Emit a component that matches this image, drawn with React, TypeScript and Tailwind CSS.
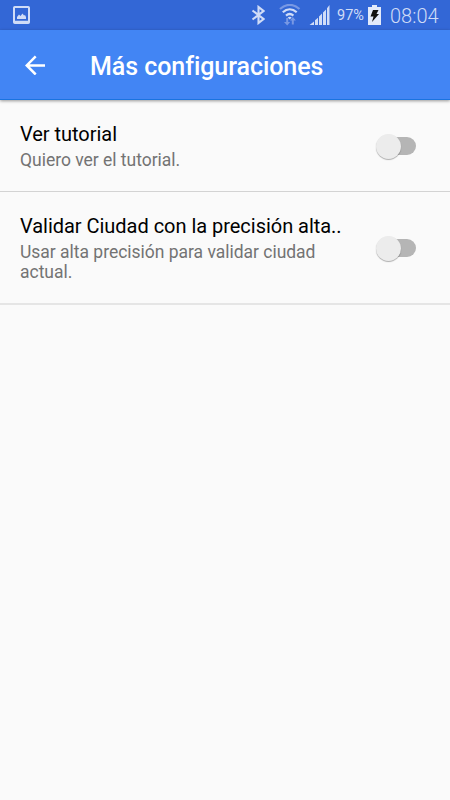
import React from 'react';

interface SettingRowProps {
  title: string;
  description: string;
  className: string;
}

const StatusBar: React.FC = () => {
  return (
    <div className="flex h-[30px] items-center bg-[#3367d6] text-[#d0dcf7]">
      {/* Screenshot notification */}
      <svg className="ml-[13px] h-[18px] w-[17px]" viewBox="0 0 17 18" fill="none">
        <rect x="1" y="1" width="15" height="16" rx="0.8" stroke="currentColor" strokeWidth="2" />
        <path d="M2 15.5h13" stroke="currentColor" strokeWidth="1.5" />
        <path d="M4 13v-2l2-2.5L7.500 10l2-2.500 1.500 2 1-.5 1 2v2z" fill="currentColor" />
      </svg>

      <svg className="ml-[221px] h-5 w-[14px]" viewBox="0 0 14 20" fill="none" stroke="currentColor" strokeWidth="2.100">
        <path d="M1.500 5.500l11 8.500L7.500 18V2l5 4-11 8.500" />
      </svg>

      {/* Wifi with up/down traffic arrows */}
      <svg className="ml-[14px] h-[22px] w-[22px]" viewBox="0 0 22 22" fill="none">
        <path d="M1 5C7-.5 14.500-.5 20.500 5" stroke="#7898e4" strokeWidth="2.200" />
        <path d="M3.800 8.300c4.200-3.900 9.700-3.900 13.900 0M7 11.600c2.400-2.100 5-2.100 7.400 0" stroke="currentColor" strokeWidth="2.200" />
        <path d="M8.700 13.400q2-1.500 4 0l-2 2z" fill="currentColor" />
        <path d="M7.200 14h2v4h2L8.200 21.500 5 18h2.200zM14.800 20.500h-2v-4H11l2.900-3.500 3 3.500h-2.100z" fill="#7898e4" />
      </svg>

      <svg className="ml-[8px] h-5 w-[21px]" viewBox="0 0 21 20" fill="currentColor">
        <path d="M.5 20l4.500-3.500V20zM6 15.300l3-2.600V20H6zM10 11.500L13 8.500V20h-3zM14 7.500l3-3V20h-3zM18 3.200L20.500 0v20H18z" />
      </svg>

      <span className="ml-[7px] w-[29px] whitespace-nowrap pt-[2px] text-[14.5px] leading-[28px]">97%</span>

      <svg className="ml-[2px] h-5 w-[13px]" viewBox="0 0 13 20">
        <path d="M4 0h5v2h4v18H0V2h4z" fill="#e3eafa" />
        <path d="M5 5h5.500L8.500 9H11l-7 8 1.500-5.500H2.500z" fill="#111" />
      </svg>

      <span className="ml-[9px] whitespace-nowrap pt-[2px] text-[20px] leading-[28px] font-light">08:04</span>
    </div>
  );
};

const Toggle: React.FC = () => {
  return (
    <button type="button" role="switch" aria-checked="false" className="relative h-[25px] w-10">
      <span className="absolute top-[3px] right-0 h-[18px] w-[34px] rounded-full bg-[#b5b5b5]" />
      <span className="absolute top-0 left-0 h-[25px] w-[25px] rounded-full bg-[#ececec] shadow-[0_1px_1px_rgba(0,0,0,0.3)]" />
    </button>
  );
};

const SettingRow: React.FC<SettingRowProps> = ({ title, description, className }) => {
  return (
    <div className={`flex items-center pr-[34px] pl-5 ${className}`}>
      <div className="w-[330px]">
        <h2 className="text-[20px] leading-[26px] tracking-[-0.03px] whitespace-nowrap text-black">{title}</h2>
        <p className="pt-[3px] text-[17.5px] leading-5 tracking-[-0.02px] text-[#737373]">{description}</p>
      </div>
      <div className="ml-auto flex pt-px">
        <Toggle />
      </div>
    </div>
  );
};

const App: React.FC = () => {
  return (
    <div className="h-[800px] w-[450px] overflow-hidden bg-[#fafafa] font-['Roboto',sans-serif]">
      <StatusBar />
      <header className="flex h-[70px] items-center border-b border-[#1a73e0] bg-[#4285f4] text-white shadow-[0_1px_3px_rgba(0,0,0,0.4)]">
        <button type="button" aria-label="Atrás" className="ml-[25px]">
          <svg className="h-5 w-5" viewBox="0 0 20 20" fill="none" stroke="currentColor" strokeWidth="2.500">
            <path d="M20 10.500H2M10.700 1.300L1.700 10.500l9 9" />
          </svg>
        </button>
        <h1 className="ml-[45px] pt-[4px] text-[25px] leading-8 font-medium tracking-[-0.06px] whitespace-nowrap">
          Más configuraciones
        </h1>
      </header>
      <main>
        <SettingRow
          title="Ver tutorial"
          description="Quiero ver el tutorial."
          className="h-[92px] border-b border-[#d3d3d3]"
        />
        <SettingRow
          title="Validar Ciudad con la precisión alta.."
          description="Usar alta precisión para validar ciudad actual."
          className="h-[113px] border-b-2 border-[#e5e5e5]"
        />
      </main>
    </div>
  );
};

export default App;
